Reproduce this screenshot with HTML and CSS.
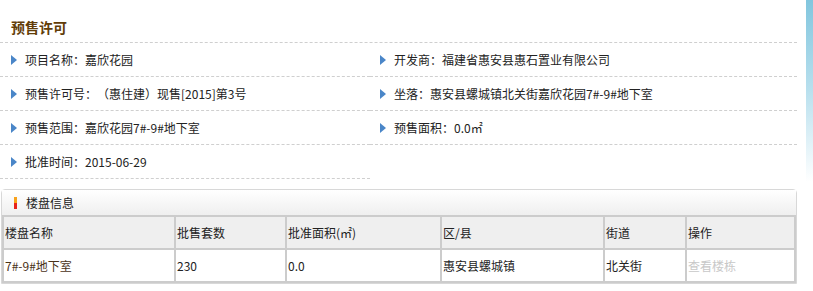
FILE: index.html
```html
<!DOCTYPE html>
<html lang="zh-CN">
<head>
  <meta charset="UTF-8" />
  <title>预售许可</title>
  <link rel="stylesheet" href="styles.css">
</head>
<body>
  <div class="side-glow"></div>
  <div class="wrap">
    <h3 class="title">预售许可</h3>
    <div class="info">
      <div class="item"><span class="arrow"></span>项目名称：嘉欣花园</div>
      <div class="item"><span class="arrow"></span>开发商：福建省惠安县惠石置业有限公司</div>
      <div class="item"><span class="arrow"></span>预售许可号：（惠住建）现售[2015]第3号</div>
      <div class="item"><span class="arrow"></span>坐落：惠安县螺城镇北关街嘉欣花园7#-9#地下室</div>
      <div class="item"><span class="arrow"></span>预售范围：嘉欣花园7#-9#地下室</div>
      <div class="item"><span class="arrow"></span>预售面积：0.0㎡</div>
      <div class="item"><span class="arrow"></span>批准时间：2015-06-29</div>
      <div class="item empty"></div>
    </div>

    <div class="box">
      <div class="box-head"><span class="mark"></span>楼盘信息</div>
      <table class="list">
        <tr>
          <th class="c1">楼盘名称</th>
          <th class="c2">批售套数</th>
          <th class="c3">批准面积(㎡)</th>
          <th class="c4">区/县</th>
          <th class="c5">街道</th>
          <th class="c6">操作</th>
        </tr>
        <tr>
          <td class="name">7#-9#地下室</td>
          <td>230</td>
          <td>0.0</td>
          <td>惠安县螺城镇</td>
          <td>北关街</td>
          <td class="op">查看楼栋</td>
        </tr>
      </table>
    </div>
  </div>
</body>
</html>
```

FILE: styles.css
```css
body {
  margin: 0;
  padding: 0;
  background: #fff;
  font-family: "Noto Sans CJK SC", "DejaVu Sans", sans-serif;
  font-size: 12px;
  color: #222;
  text-spacing-trim: space-all;
  font-feature-settings: "chws" 0, "halt" 0;
}
.side-glow {
  position: fixed;
  top: 0;
  right: 0;
  width: 7px;
  height: 182px;
  background: linear-gradient(to bottom, #82c6de 0%, #b9e0ee 50%, #ffffff 100%);
}
.wrap {
  width: 797px;
}
.title {
  margin: 0;
  height: 20px;
  line-height: 20px;
  padding: 17px 0 5px 11px;
  font-size: 14px;
  font-weight: bold;
  color: #623d08;
  border-bottom: 1px dashed #cfcfcf;
}
.info {
  display: grid;
  grid-template-columns: 370px 427px;
}
.item {
  height: 33px;
  line-height: 33px;
  border-bottom: 1px dashed #cfcfcf;
  padding-left: 11px;
  display: flex;
  align-items: center;
}
.item:nth-child(even) {
  padding-left: 10px;
}
.item.empty {
  border-bottom: none;
}
.arrow {
  display: inline-block;
  width: 0;
  height: 0;
  border-top: 5px solid transparent;
  border-bottom: 5px solid transparent;
  border-left: 6px solid #4a86c8;
  margin-right: 8px;
}
.box {
  margin: 10px 0 0 1px;
  width: 794px;
  border: 1px solid #d8d8d8;
  border-radius: 4px 4px 0 0;
}
.box-head {
  height: 25px;
  line-height: 25px;
  display: flex;
  align-items: center;
  background: linear-gradient(to bottom, #ffffff, #efefef);
  font-size: 12px;
  color: #222;
}
.mark {
  display: inline-block;
  width: 3px;
  height: 12px;
  margin: 0 9px 0 12px;
  background: linear-gradient(to bottom, #f7a21b 50%, #e8231b 50%);
}
.list {
  width: 100%;
  border-collapse: collapse;
  table-layout: fixed;
}
.list th,
.list td {
  border: 2px solid #cccccc;
  height: 31px;
  padding: 0 1px;
  text-align: left;
  font-weight: normal;
  color: #222;
  white-space: nowrap;
}
.list th {
  background: #efefef;
}
.list td {
  background: #fff;
}
.c1 { width: 168px; }
.c2 { width: 107px; }
.c3 { width: 151px; }
.c4 { width: 159px; }
.c5 { width: 78px; }
.list td.name {
  color: #4a3218;
}
.list td.op {
  color: #c8c8c8;
}
```
